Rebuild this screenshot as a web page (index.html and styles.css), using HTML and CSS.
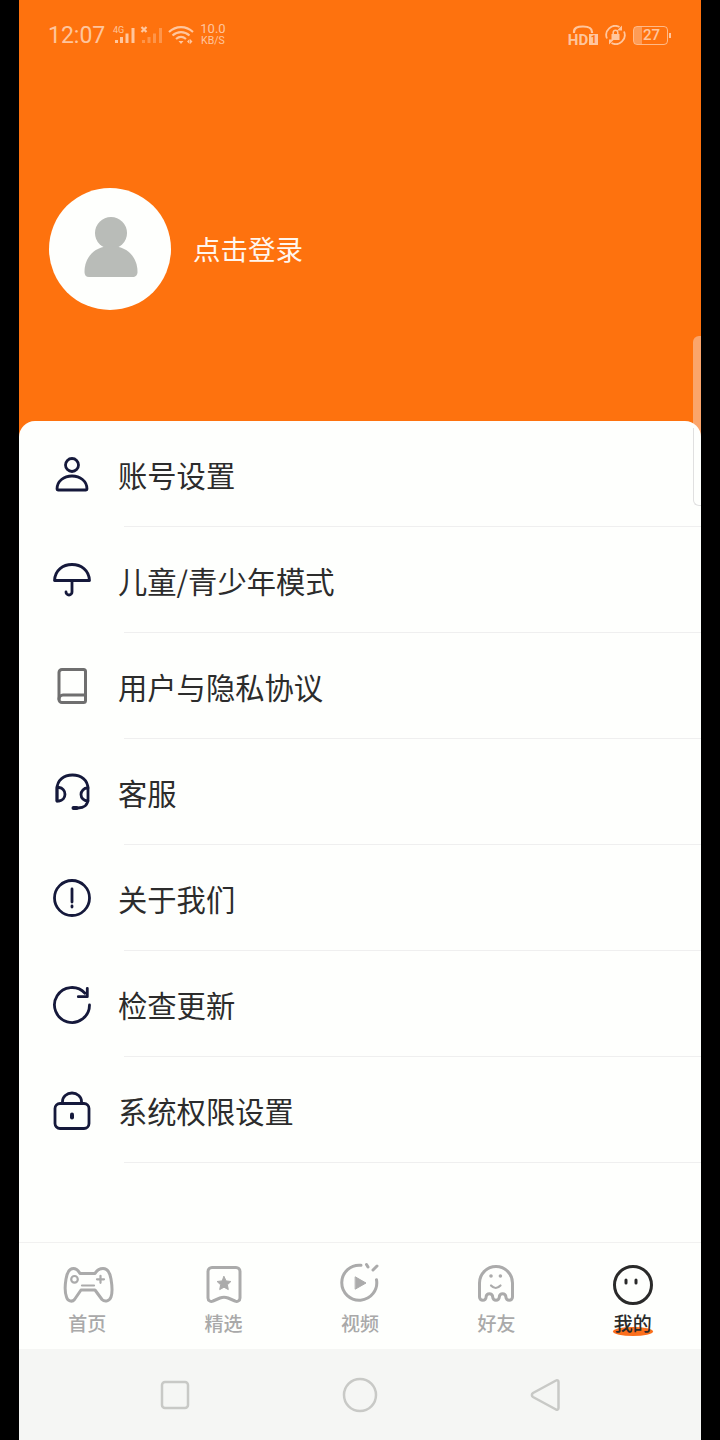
FILE: index.html
```html
<!DOCTYPE html>
<html lang="en">
<head>
  <meta charset="UTF-8">
  <title>我的</title>
  <link rel="stylesheet" href="styles.css">
</head>
<body>

  <div class="screen">

    <div class="top">
      <div class="status">
        <div class="status-group">
          <span class="time">12:07</span>
          <svg class="st-signal" width="24" height="20" viewBox="0 0 24 20">
            <text x="1" y="7.500" class="st-small">4G</text>
            <path d="M3 15h3v3H3zM8 12h3v6H8zM13.500 8.500h3V18h-3zM19.500 3h3v15h-3z"/>
          </svg>
          <svg class="st-signal" width="24" height="20" viewBox="0 0 24 20">
            <path d="M1.500 2l5 5M6.500 2l-5 5" class="st-line"/>
            <path class="st-dim" d="M2 15h3v3H2zM7.500 12h3v6h-3zM13 8.500h3V18h-3zM19 3h3v15h-3z"/>
          </svg>
          <svg class="st-wifi" width="26" height="20" viewBox="0 0 26 20">
            <path d="M1 7c7-6.500 17-6.500 24 0M4.500 10.500c5-4.500 12-4.500 17 0M8 14c3-2.500 7-2.500 10 0" class="st-line"/>
            <path d="M10.500 16h5l-2.500 3zM19 16.500l2.500-2.500v5zM24.500 16.500l-2.500-2.500v5z"/>
          </svg>
          <div class="speed">
            <span>10.0</span>
            <span class="speed-unit">KB/S</span>
          </div>
        </div>
        <div class="status-group status-right">
          <div class="hd">
            <svg width="22" height="9" viewBox="0 0 22 9">
              <path d="M2 8V7C2 3 5 1.500 11 1.500S20 3 20 7v1" class="st-line"/>
            </svg>
            <div class="hd-text">HD<span class="hd-num">1</span></div>
          </div>
          <svg class="st-lock" width="21" height="20" viewBox="0 0 21 20">
            <path d="M2 13.500A9 9 0 0 1 14.500 2M19 6.500A9 9 0 0 1 6.500 18" class="st-ring"/>
            <path d="M17 .5v5h-5zM4 19.500v-5h5zM6.500 9h8v6h-8z"/>
            <path d="M8.200 9V7.500a2.300 2.300 0 0 1 4.600 0V9" class="st-thin"/>
          </svg>
          <div class="battery">
            <div class="battery-body"><span class="battery-level"></span><span class="battery-num">27</span></div>
            <span class="battery-nub"></span>
          </div>
        </div>
      </div>

      <div class="profile">
        <div class="avatar">
          <svg width="56" height="62" viewBox="0 0 56 62">
            <circle cx="28" cy="17" r="16"/>
            <path d="M1.500 56C1.500 41 12 30 28 30s26.500 11 26.500 26c0 3-2 5-5 5H6c-3 0-4.500-2-4.500-5z"/>
          </svg>
        </div>
        <span class="login">点击登录</span>
      </div>
    </div>

    <div class="scroll-thumb"></div>

    <div class="card">
      <div class="row">
        <svg class="row-icon" viewBox="0 0 40 40">
          <circle cx="20" cy="9" r="6.500"/>
          <path d="M5 33c0-8 7-13 15-13s15 5 15 13c0 .5-.5 1-1 1H6c-.5 0-1-.5-1-1z"/>
        </svg>
        <span>账号设置</span>
      </div>
      <div class="sep"></div>

      <div class="row">
        <svg class="row-icon" viewBox="0 0 40 40">
          <path d="M2.500 18.500C3 8 11 2.500 20 2.500S37 8 37.500 18.500z"/>
          <path d="M20 18.500V30a3 3 0 0 1-6 0"/>
        </svg>
        <span>儿童/青少年模式</span>
      </div>
      <div class="sep"></div>

      <div class="row">
        <svg class="row-icon row-icon-grey" viewBox="0 0 40 40">
          <path d="M10 1.500h21.500a2 2 0 0 1 2 2v29a2 2 0 0 1-2 2H10a3 3 0 0 1-3-3V4.500a3 3 0 0 1 3-3z"/>
          <path d="M7 31a4 4 0 0 1 4-4h22.500"/>
        </svg>
        <span>用户与隐私协议</span>
      </div>
      <div class="sep"></div>

      <div class="row">
        <svg class="row-icon" viewBox="0 0 40 40">
          <path d="M5 27V15C5 6 12 1 20.500 1S36 6 36 15v10c0 6-4 9-10 9h-4"/>
          <path d="M5 13.500h2a6.800 6.800 0 0 1 0 13.500H5zM36 14h-.5a6.500 6.500 0 0 0 0 13H36"/>
          <path class="row-icon-thick" d="M21.500 34h3"/>
        </svg>
        <span>客服</span>
      </div>
      <div class="sep"></div>

      <div class="row">
        <svg class="row-icon" viewBox="0 0 40 40">
          <circle cx="20" cy="18" r="17.500"/>
          <path d="M20 9v13M20 26v1"/>
        </svg>
        <span>关于我们</span>
      </div>
      <div class="sep"></div>

      <div class="row">
        <svg class="row-icon" viewBox="0 0 40 40">
          <path d="M33 7.300A17.500 17.500 0 1 0 37.500 19"/>
          <path d="M35.300 2.300v8.400h-9"/>
        </svg>
        <span>检查更新</span>
      </div>
      <div class="sep"></div>

      <div class="row">
        <svg class="row-icon" viewBox="0 0 40 40">
          <rect x="3" y="11.500" width="34" height="25" rx="5"/>
          <path d="M10.500 11.500V9.500a9.500 8.500 0 0 1 19 0v2"/>
          <path class="row-icon-thick" d="M20 22.500v3"/>
        </svg>
        <span>系统权限设置</span>
      </div>
      <div class="sep"></div>
    </div>

    <div class="tabs">
      <div class="tab">
        <svg class="tab-icon" viewBox="0 0 50 40">
          <path d="M18 8.500H33C35 5 38 3.500 41 3.500C46 3.500 48 8 49 14C50 20 50.500 28 49 32C47.500 36 43 37.500 40 34.500L33 25H19L12.500 34.500C10 37.500 5.500 36 4.500 32C3 28 3 20 4 14C5 8 7 3.500 11.500 3.500C14 3.500 16 5 18 8.500Z"/>
          <path class="tab-thin" d="M20 20.500H32"/>
          <circle class="tab-thin" cx="12.500" cy="14.300" r="3.300"/>
          <path class="tab-thin" d="M35 14.300h7M38.500 10.800v7"/>
        </svg>
        <span>首页</span>
      </div>
      <div class="tab">
        <svg class="tab-icon" viewBox="0 0 50 40">
          <path d="M13 2.500H37a4 4 0 0 1 4 4V33c0 3-3 4-5 3L29 33c-3-1-5-1-8 0L14 36c-2 1-5 0-5-3V6.500a4 4 0 0 1 4-4z"/>
          <path class="tab-fill" d="M25 11.500l2.100 4.400 4.800.6-3.500 3.300.9 4.800-4.300-2.400-4.300 2.400.9-4.800-3.500-3.300 4.800-.6z"/>
        </svg>
        <span>精选</span>
      </div>
      <div class="tab">
        <svg class="tab-icon" viewBox="0 0 50 40">
          <path d="M26 .3A17.500 17.500 0 1 0 41.500 14.700"/>
          <path d="M31.500 -.5L33 2M38 5l4-4"/>
          <path class="tab-fill" d="M20.500 12L31 18L20.500 24Z"/>
        </svg>
        <span>视频</span>
      </div>
      <div class="tab">
        <svg class="tab-icon" viewBox="0 0 50 40">
          <path d="M8.500 18A16.500 16.500 0 0 1 41.500 18V32a3.300 3.300 0 0 1-6.600 0a3.300 3.300 0 0 0-6.600 0a3.300 3.300 0 0 1-6.600 0a3.300 3.300 0 0 0-6.600 0a3.300 3.300 0 0 1-6.600 0Z"/>
          <path class="tab-thin" d="M20 20.500q4.700 5 9.500 0"/>
          <circle class="tab-fill tab-dot" cx="20" cy="11" r="1.800"/>
          <circle class="tab-fill tab-dot" cx="29.400" cy="11" r="1.800"/>
        </svg>
        <span>好友</span>
      </div>
      <div class="tab tab-active">
        <svg class="tab-icon" viewBox="0 0 50 40">
          <circle cx="25" cy="20" r="18.500"/>
          <path class="tab-eye" d="M18 15v3M28 15v3"/>
        </svg>
        <span class="tab-label">我的</span>
      </div>
    </div>

    <div class="nav">
      <svg class="nav-icon" viewBox="0 0 40 40">
        <rect x="7" y="7" width="26" height="26" rx="3"/>
      </svg>
      <svg class="nav-icon" viewBox="0 0 40 40">
        <circle cx="20" cy="20" r="16"/>
      </svg>
      <svg class="nav-icon" viewBox="0 0 40 40">
        <path d="M31 5.500c1 -.7 2.500 0 2.500 1.500v26c0 1.500-1.500 2.200-2.500 1.500L8 22c-1.500-1-1.500-3 0-4z"/>
      </svg>
    </div>

    <div class="scroll-edge"></div>
  </div>

</body>
</html>
```

FILE: styles.css
```css
*{
  margin: 0;
  padding: 0;
  box-sizing: border-box;
}

body{
  background-color: #000000;
  font-family: "Noto Sans CJK SC", "Noto Sans", sans-serif;
  overflow: hidden;
}

.screen{
  width: 682px;
  height: 1440px;
  margin: 0 auto;
  display: flex;
  flex-direction: column;
  position: relative;
  background-color: #fefffd;
}

/* orange head */
.top{
  height: 440px;
  margin-bottom: -19px;
  background-color: #fe720e;
}

.status{
  height: 70px;
  padding: 0 30px 0 29px;
  display: flex;
  justify-content: space-between;
  align-items: center;
  color: rgba(255, 255, 255, .6);
}

.status-group{
  display: flex;
  align-items: center;
  gap: 4px;
}

.status-right{
  gap: 7px;
}

.status svg{
  fill: rgba(255, 255, 255, .6);
}

.status .st-line{
  fill: none;
  stroke: rgba(255, 255, 255, .6);
  stroke-width: 2.200;
}

.status .st-ring{
  fill: none;
  stroke: rgba(255, 255, 255, .6);
  stroke-width: 1.800;
}

.status .st-thin{
  fill: none;
  stroke: rgba(255, 255, 255, .6);
  stroke-width: 1.500;
}

.status .st-dim{
  fill: rgba(255, 255, 255, .25);
}

.st-small{
  font: 9px Roboto, sans-serif;
}

.time{
  font: 23px Roboto, sans-serif;
  margin-right: 3px;
}

.speed{
  display: flex;
  flex-direction: column;
  align-items: center;
  font: 13px/12px Roboto, sans-serif;
  margin-left: 2px;
}

.speed-unit{
  font-size: 10.500px;
}

.hd{
  width: 30px;
  display: flex;
  flex-direction: column;
  align-items: center;
}

.hd-text{
  display: flex;
  align-items: center;
  font: bold 15px/12px Roboto, sans-serif;
}

.hd-num{
  width: 9px;
  height: 11px;
  margin-left: 1px;
  background-color: rgba(255, 255, 255, .6);
  color: #fe720e;
  font-size: 10px;
  line-height: 11px;
  text-align: center;
}

.battery{
  display: flex;
  align-items: center;
  gap: 1px;
}

.battery-body{
  width: 35px;
  height: 19px;
  border: 1.500px solid rgba(255, 255, 255, .5);
  border-radius: 4px;
  display: flex;
  align-items: center;
  overflow: hidden;
}

.battery-level{
  width: 8px;
  height: 100%;
  background-color: rgba(255, 255, 255, .3);
}

.battery-num{
  flex: 1;
  padding-right: 6px;
  font: 500 15px/16px Roboto, sans-serif;
  text-align: center;
}

.battery-nub{
  width: 2px;
  height: 5px;
  background-color: rgba(255, 255, 255, .6);
}

.profile{
  margin-top: 118px;
  padding-left: 30px;
  display: flex;
  align-items: center;
  gap: 22px;
}

.avatar{
  width: 122px;
  height: 122px;
  border-radius: 50%;
  background-color: #fefffd;
  display: flex;
  justify-content: center;
  align-items: center;
}

.avatar svg{
  fill: #b9bcb8;
  margin: 0 0 4px 2px;
}

.login{
  font-size: 27.500px;
  line-height: 40px;
  color: #fff6ee;
  margin-bottom: 2px;
}

/* scroll handle, its upper half sits behind the card corner */
.scroll-thumb{
  position: absolute;
  top: 336px;
  right: 0;
  width: 8px;
  height: 110px;
  background-color: #fba56b;
  border-radius: 6px 0 0 0;
}

.scroll-edge{
  position: absolute;
  top: 428px;
  right: 0;
  width: 8px;
  height: 78px;
  border-left: 1px solid #e0e0e0;
  border-bottom: 1px solid #e0e0e0;
  border-radius: 0 0 0 6px;
}

/* menu list */
.card{
  flex: 1;
  background-color: #fefffd;
  border-radius: 16px 16px 0 0;
  position: relative;
}

.row{
  height: 105px;
  padding-left: 33px;
  display: flex;
  align-items: center;
  gap: 26px;
  font-size: 29.300px;
  line-height: 40px;
  color: #2c2c2c;
}

.row span{
  margin-top: 1px;
}

.row-icon{
  width: 40px;
  height: 40px;
  overflow: visible;
  fill: none;
  stroke: #15193b;
  stroke-width: 2.800;
  stroke-linecap: round;
  stroke-linejoin: round;
  margin-top: 5px;
}

.row-icon-grey{
  stroke: #6f6f6f;
  stroke-width: 3;
}

.row-icon .row-icon-thick{
  stroke-width: 4;
}

.sep{
  height: 1px;
  margin-left: 105px;
  background-color: #efefef;
}

/* bottom tabs */
.tabs{
  height: 107px;
  border-top: 1px solid #f1f1f0;
  display: flex;
  background-color: #fefffd;
}

.tab{
  flex: 1;
  padding-top: 22px;
  display: flex;
  flex-direction: column;
  align-items: center;
  font-size: 19px;
  font-weight: 500;
  line-height: 26px;
  color: #a9a9a9;
}

.tab-icon{
  width: 50px;
  height: 40px;
  margin-bottom: 5px;
  overflow: visible;
  fill: none;
  stroke: #ababab;
  stroke-width: 3;
  stroke-linecap: round;
  stroke-linejoin: round;
}

.tab-icon .tab-fill{
  fill: #ababab;
  stroke-width: 1;
}

.tab-icon .tab-dot{
  stroke: none;
}

.tab-icon .tab-thin{
  stroke-width: 2.200;
}

.tab-active{
  color: #2a2a2a;
}

.tab-active .tab-icon{
  stroke: #2a2a2a;
}

.tab-active .tab-icon .tab-eye{
  stroke-width: 3;
}

.tab-label{
  position: relative;
  z-index: 0;
}

/* orange smear under the active label */
.tab-label::before{
  content: "";
  position: absolute;
  z-index: -1;
  left: -1px;
  right: -1px;
  bottom: 0;
  height: 9px;
  border-radius: 50%;
  background-color: #fb6f1c;
}

/* system navigation */
.nav{
  height: 91px;
  background-color: #f5f6f4;
  display: flex;
  justify-content: center;
  align-items: center;
  gap: 145px;
}

.nav-icon{
  width: 40px;
  height: 40px;
  fill: none;
  stroke: #c8c9c6;
  stroke-width: 2.500;
}
```
